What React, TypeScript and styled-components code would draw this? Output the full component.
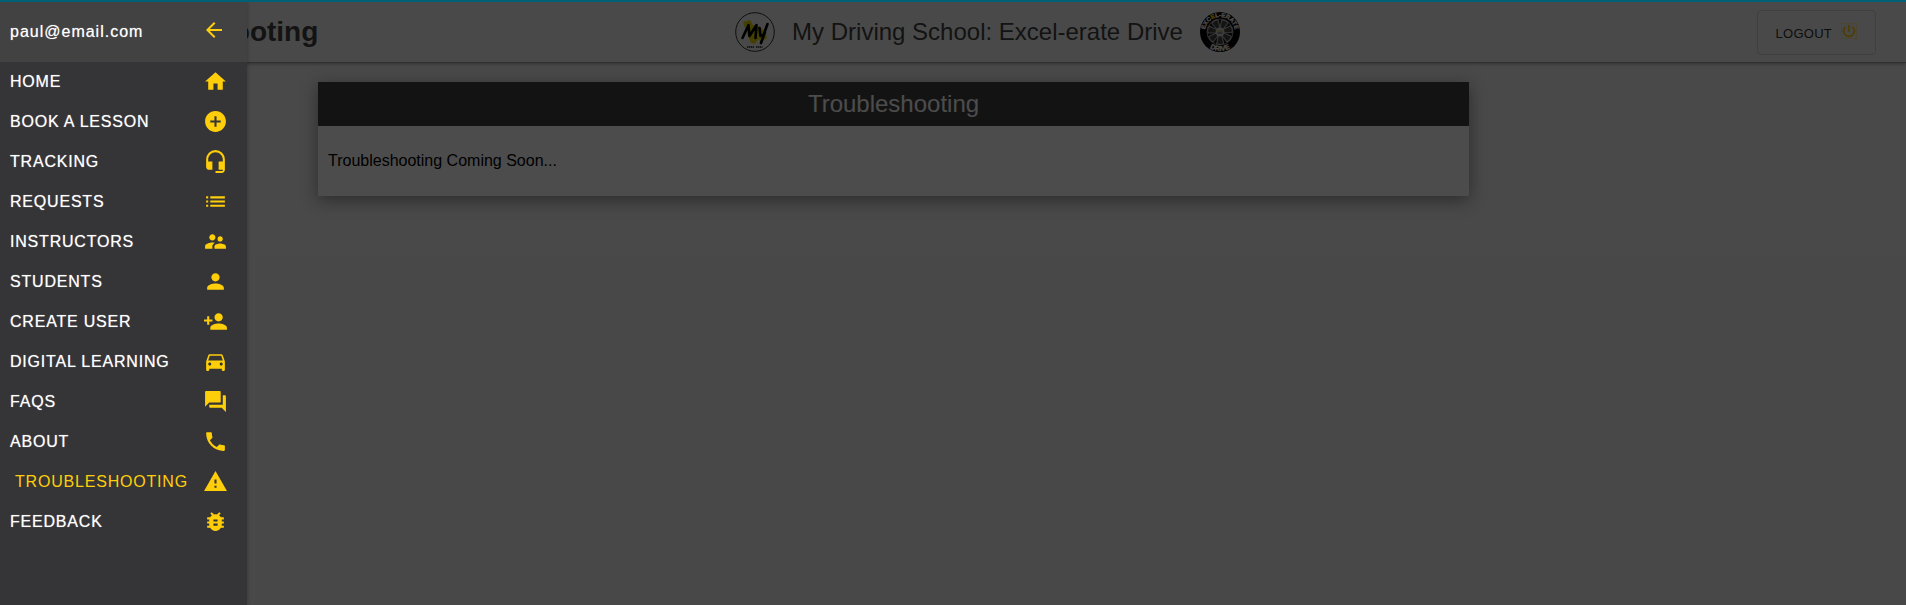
import React from "react";
import styled, { createGlobalStyle } from "styled-components";
import type { IconType } from "react-icons";
import {
  MdAddCircle,
  MdArrowBack,
  MdBugReport,
  MdDirectionsCar,
  MdHeadsetMic,
  MdHome,
  MdList,
  MdPerson,
  MdPersonAdd,
  MdPhone,
  MdPowerSettingsNew,
  MdQuestionAnswer,
  MdSupervisorAccount,
  MdWarning,
} from "react-icons/md";

const ACCENT = "#ffce0a";

const GlobalStyle = createGlobalStyle`
  * { box-sizing: border-box; }
  body {
    margin: 0;
    background: #f3f3f3;
    font-family: "Liberation Sans", Arial, sans-serif;
  }
`;

const Shell = styled.div`
  position: relative;
  display: flex;
  flex-direction: column;
  min-height: 100vh;
`;

const ProgressLine = styled.div`
  position: relative;
  z-index: 3;
  height: 2px;
  background: #006077;
`;

const Header = styled.header`
  display: grid;
  grid-template-columns: 1fr auto 1fr;
  align-items: center;
  height: 61px;
  padding: 0 30px 0 99px;
  background: #f6f6f6;
  border-bottom: 1px solid #a0a0a0;
  box-shadow: 0 1px 3px rgba(0, 0, 0, 0.3);
`;

const PageTitle = styled.h1`
  margin: 0;
  font-size: 28px;
  line-height: 32px;
  color: #424242;
`;

const Brand = styled.div`
  display: flex;
  align-items: center;
  gap: 17px;
  font-size: 24px;
  line-height: 28px;
  color: #424242;
  white-space: nowrap;

  svg {
    display: block;
    width: 40px;
    height: 40px;
  }
`;

const LogoutButton = styled.button`
  justify-self: end;
  display: flex;
  align-items: center;
  gap: 9px;
  height: 45px;
  padding: 0 18px;
  border: 1px solid #d2d2d2;
  border-radius: 4px;
  background: transparent;
  color: #303030;
  font: 400 13px/20px "Liberation Sans", Arial, sans-serif;
  letter-spacing: 0.02em;
  text-transform: uppercase;

  svg {
    width: 16px;
    height: 16px;
    margin-bottom: 2px;
    color: ${ACCENT};
    stroke: ${ACCENT};
    stroke-width: 1px;
  }
`;

const LogoutLabel = styled.span`
  padding-top: 4px;
`;

const Main = styled.main`
  flex: 1;
  padding: 19px 437px 19px 318px;
`;

const Card = styled.section`
  background: #ffffff;
  box-shadow: 0 4px 16px rgba(0, 0, 0, 0.4);
`;

const CardTitle = styled.h2`
  margin: 0;
  padding: 8px;
  background: #424242;
  color: #ffffff;
  font-size: 24px;
  font-weight: 400;
  line-height: 28px;
  text-align: center;
`;

const CardText = styled.p`
  margin: 0;
  padding: 25px 10px;
  font-size: 16px;
  line-height: 20px;
  color: #000000;
`;

const Backdrop = styled.div`
  position: absolute;
  inset: 0;
  z-index: 1;
  background: rgba(0, 0, 0, 0.7);
`;

const Drawer = styled.aside`
  position: absolute;
  top: 2px;
  bottom: 0;
  left: 0;
  z-index: 2;
  width: 247px;
  background: #353537;
  box-shadow: 0 0 4px rgba(0, 0, 0, 0.3);
`;

const DrawerHeader = styled.div`
  display: flex;
  align-items: center;
  justify-content: space-between;
  height: 60px;
  padding: 0 21px 0 10px;
  background: #424242;
  color: #ffffff;
  font-size: 16px;
  letter-spacing: 1px;
  text-shadow: 0 0 1px rgba(255, 255, 255, 0.6);
`;

const CloseButton = styled.button`
  display: flex;
  padding: 0 0 4px;
  border: 0;
  background: none;
  color: ${ACCENT};

  svg {
    width: 24px;
    height: 24px;
  }
`;

const NavList = styled.ul`
  margin: 0;
  padding: 0;
  list-style: none;
`;

const NavLink = styled.a<{ $active: boolean }>`
  display: flex;
  align-items: center;
  justify-content: space-between;
  height: 40px;
  padding: 0 19px 2px ${(p) => (p.$active ? 15 : 10)}px;
  color: ${(p) => (p.$active ? ACCENT : "#ffffff")};
  font-size: 16px;
  line-height: 20px;
  letter-spacing: 0.05em;
  text-decoration: none;
  text-transform: uppercase;
  text-shadow: ${(p) => (p.$active ? "none" : "0 0 1px rgba(255, 255, 255, 0.6)")};

  svg {
    width: 25px;
    height: 25px;
    color: ${ACCENT};
  }
`;

const NavLabel = styled.span`
  padding-top: 2px;
`;

const items: { label: string; icon: IconType; active?: boolean }[] = [
  { label: "Home", icon: MdHome },
  { label: "Book a lesson", icon: MdAddCircle },
  { label: "Tracking", icon: MdHeadsetMic },
  { label: "Requests", icon: MdList },
  { label: "Instructors", icon: MdSupervisorAccount },
  { label: "Students", icon: MdPerson },
  { label: "Create user", icon: MdPersonAdd },
  { label: "Digital learning", icon: MdDirectionsCar },
  { label: "FAQs", icon: MdQuestionAnswer },
  { label: "About", icon: MdPhone },
  { label: "Troubleshooting", icon: MdWarning, active: true },
  { label: "Feedback", icon: MdBugReport },
];

function MyLogo() {
  return (
    <svg viewBox="0 0 40 40" aria-hidden="true">
      <circle cx="20" cy="20" r="19.3" fill="#f4f4f4" stroke="#333" strokeWidth="1" />
      <path d="M8 10l7-2 3 5 5 1 7 5 2 7-6 4-3-3-3 5-4-1-4-9z" fill="#e6d800" />
      <g fill="none" stroke="#000" strokeLinecap="round" strokeLinejoin="round">
        <path strokeWidth="2.600" d="M7.500 26l6-13 1 11 7-11-1 13" />
        <path strokeWidth="2.600" d="M24.500 16l1 8 3-1 4-11M30 20l-4 11" />
      </g>
      <path d="M12 35h7M21 35h6.500" stroke="#555" strokeWidth="2" strokeDasharray="1.500 0.500" />
    </svg>
  );
}

function WheelLogo() {
  const spokes = [0, 51, 103, 154, 206, 257, 309];
  return (
    <svg viewBox="0 0 40 40" aria-hidden="true">
      <defs>
        <path id="rim-top" d="M5 20a15 15 0 0 1 30 0" />
        <path id="rim-bottom" d="M1 20a19 19 0 0 0 38 0" />
      </defs>
      <circle cx="20" cy="20" r="20" fill="#000" />
      <circle cx="20" cy="20" r="13" fill="#161616" stroke="#8d8d8d" strokeWidth="1" />
      {spokes.map((angle) => (
        <path
          key={angle}
          d="M18.500 17L16.500 8.500Q20 6.500 23.500 8.500L21.500 17z"
          fill="#444"
          stroke="#bdbdbd"
          strokeWidth="1"
          transform={`rotate(${angle + 25} 20 20)`}
        />
      ))}
      <circle cx="20" cy="20" r="4.500" fill="#cfcfcf" />
      <path d="M17.500 19h5" stroke="#b7a900" />
      <path d="M17.500 21h5" stroke="#444" />
      <g
        fill="#fff"
        stroke="#fff"
        strokeWidth="0.300"
        fontFamily="Liberation Sans, sans-serif"
        fontWeight="700"
        fontSize="6"
        textAnchor="middle"
      >
        <text>
          <textPath href="#rim-top" startOffset="50%">
            EXC<tspan fill="#ffe000" stroke="#ffe000">E</tspan>L-ERATE
          </textPath>
        </text>
        <text fontSize="7">
          <textPath href="#rim-bottom" startOffset="50%">DRIVE</textPath>
        </text>
      </g>
    </svg>
  );
}

export default function App() {
  return (
    <>
      <GlobalStyle />
      <Shell>
        <ProgressLine />
        <Header>
          <PageTitle>Troubleshooting</PageTitle>
          <Brand>
            <MyLogo />
            <span>My Driving School: Excel-erate Drive</span>
            <WheelLogo />
          </Brand>
          <LogoutButton type="button">
            <LogoutLabel>Logout</LogoutLabel>
            <MdPowerSettingsNew />
          </LogoutButton>
        </Header>
        <Main>
          <Card>
            <CardTitle>Troubleshooting</CardTitle>
            <CardText>Troubleshooting Coming Soon...</CardText>
          </Card>
        </Main>
        <Backdrop />
        <Drawer>
          <DrawerHeader>
            <span>paul@email.com</span>
            <CloseButton type="button" aria-label="Close menu">
              <MdArrowBack />
            </CloseButton>
          </DrawerHeader>
          <nav>
            <NavList>
              {items.map(({ label, icon: Icon, active = false }) => (
                <li key={label}>
                  <NavLink href="#" $active={active} aria-current={active ? "page" : undefined}>
                    <NavLabel>{label}</NavLabel>
                    <Icon />
                  </NavLink>
                </li>
              ))}
            </NavList>
          </nav>
        </Drawer>
      </Shell>
    </>
  );
}
